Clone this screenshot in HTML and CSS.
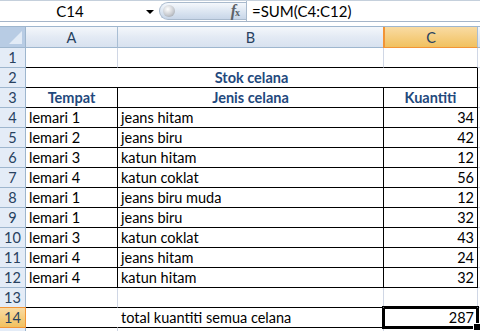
FILE: index.html
```
<!DOCTYPE html>
<html lang="en">
<head>
  <meta charset="UTF-8">
  <title>Stok celana</title>
  <link rel="stylesheet" href="styles.css">
</head>
<body>
  <!-- Formula bar -->
  <div class="formula-bar">
    <div class="name-box">
      <span class="name">C14</span>
      <span class="arrow"></span>
    </div>
    <div class="fx-pill">
      <span class="knob"></span>
      <span class="fx"><i>f</i><sub>x</sub></span>
    </div>
    <div class="formula">=SUM(C4:C12)</div>
  </div>

  <!-- Sheet grid -->
  <div class="sheet">
    <div class="hd corner"><span class="tri"></span></div>
    <div class="hd col">A</div>
    <div class="hd col">B</div>
    <div class="hd col sel-col">C</div>
    <div class="hd col"></div>

    <div class="hd row">1</div>
    <div class="cell bb"></div>
    <div class="cell bb"></div>
    <div class="cell bb"></div>
    <div class="cell"></div>

    <div class="hd row">2</div>
    <div class="cell span3 bb br title">Stok celana</div>
    <div class="cell"></div>

    <div class="hd row">3</div>
    <div class="cell bb br title">Tempat</div>
    <div class="cell bb br title">Jenis celana</div>
    <div class="cell bb br title">Kuantiti</div>
    <div class="cell"></div>

    <div class="hd row">4</div>
    <div class="cell bb br">lemari 1</div>
    <div class="cell bb br">jeans hitam</div>
    <div class="cell bb br num">34</div>
    <div class="cell"></div>

    <div class="hd row">5</div>
    <div class="cell bb br">lemari 2</div>
    <div class="cell bb br">jeans biru</div>
    <div class="cell bb br num">42</div>
    <div class="cell"></div>

    <div class="hd row">6</div>
    <div class="cell bb br">lemari 3</div>
    <div class="cell bb br">katun hitam</div>
    <div class="cell bb br num">12</div>
    <div class="cell"></div>

    <div class="hd row">7</div>
    <div class="cell bb br">lemari 4</div>
    <div class="cell bb br">katun coklat</div>
    <div class="cell bb br num">56</div>
    <div class="cell"></div>

    <div class="hd row">8</div>
    <div class="cell bb br">lemari 1</div>
    <div class="cell bb br">jeans biru muda</div>
    <div class="cell bb br num">12</div>
    <div class="cell"></div>

    <div class="hd row">9</div>
    <div class="cell bb br">lemari 1</div>
    <div class="cell bb br">jeans biru</div>
    <div class="cell bb br num">32</div>
    <div class="cell"></div>

    <div class="hd row">10</div>
    <div class="cell bb br">lemari 3</div>
    <div class="cell bb br">katun coklat</div>
    <div class="cell bb br num">43</div>
    <div class="cell"></div>

    <div class="hd row">11</div>
    <div class="cell bb br">lemari 4</div>
    <div class="cell bb br">jeans hitam</div>
    <div class="cell bb br num">24</div>
    <div class="cell"></div>

    <div class="hd row">12</div>
    <div class="cell bb br">lemari 4</div>
    <div class="cell bb br">katun hitam</div>
    <div class="cell bb br num">32</div>
    <div class="cell"></div>

    <div class="hd row">13</div>
    <div class="cell bb"></div>
    <div class="cell bb"></div>
    <div class="cell bb"></div>
    <div class="cell"></div>

    <div class="hd row sel-row">14</div>
    <div class="cell bb no-r"></div>
    <div class="cell bb br">total kuantiti semua celana</div>
    <div class="cell bb br num active">287</div>
    <div class="cell"></div>

    <div class="hd row"></div>
    <div class="cell"></div>
    <div class="cell"></div>
    <div class="cell"></div>
    <div class="cell"></div>
  </div>
</body>
</html>
```

FILE: styles.css
```
* {
  margin: 0;
  padding: 0;
  box-sizing: border-box;
}

body {
  width: 480px;
  height: 331px;
  overflow: hidden;
  background: #fff;
  font-family: 'Lato', 'Liberation Sans', sans-serif;
  font-size: 14.5px;
  color: #000;
}

/* Formula bar */
.formula-bar {
  display: flex;
  height: 22px;
  border-top: 1px solid #c5d0dc;
  border-bottom: 1px solid #a5b5c9;
  margin-bottom: 4px;
}

.name-box {
  width: 157px;
  display: flex;
  align-items: center;
  position: relative;
}

.name-box .name {
  width: 140px;
  text-align: center;
  font-size: 15px;
}

.name-box .arrow {
  width: 0;
  height: 0;
  border-left: 4px solid transparent;
  border-right: 4px solid transparent;
  border-top: 4px solid #000;
  margin-left: 6px;
  margin-top: 1px;
}

.fx-pill {
  width: 87px;
  margin: 1px 0 1px 2px;
  border: 1px solid #a9bacd;
  border-right: none;
  border-radius: 10px 0 0 10px;
  background: linear-gradient(#f5f8fc, #dbe5f1 55%, #c8d6e8);
  display: flex;
  align-items: center;
  justify-content: space-between;
  padding: 0 6px 0 3px;
}

.knob {
  width: 12px;
  height: 12px;
  border-radius: 50%;
  background: radial-gradient(circle at 40% 35%, #ffffff, #c9ccd1 55%, #8f959c);
}

.fx {
  font-family: 'Liberation Serif', serif;
  font-size: 16px;
  font-weight: bold;
  color: #5d6269;
  line-height: 1;
}

.fx sub {
  font-size: 10px;
  vertical-align: baseline;
  margin-left: -1px;
}

.formula {
  flex: 1;
  border-left: 1px solid #a9bacd;
  padding-left: 5px;
  display: flex;
  align-items: center;
  font-size: 15px;
}

/* Sheet */
.sheet {
  display: grid;
  grid-template-columns: 26px 92px 266px 94px 1fr;
  grid-template-rows: 21px;
  grid-auto-rows: 20px;
  border-top: 1px solid #9eb6ce;
}

.cell {
  border-right: 1px solid #d0d7e5;
  border-bottom: 1px solid #d0d7e5;
  display: flex;
  align-items: center;
  padding: 0 3px;
  white-space: nowrap;
}

.hd {
  display: flex;
  align-items: center;
  justify-content: center;
  color: #27415f;
  border-right: 1px solid #9eb6ce;
  border-bottom: 1px solid #9eb6ce;
}

.hd.col {
  background: linear-gradient(#f4f7fb, #e3eaf4 50%, #d8e2ef);
  border-right-color: #a9bed4;
  padding-top: 1px;
}

.hd.row {
  background: #e4ecf7;
  font-size: 14.5px;
}

.corner {
  background: #b8cce4;
  position: relative;
}

.corner .tri {
  position: absolute;
  right: 3px;
  bottom: 3px;
  width: 0;
  height: 0;
  border-left: 13px solid transparent;
  border-bottom: 13px solid #e2ebf6;
}

.sel-col {
  background: linear-gradient(#f9dba3, #f1c15f) !important;
  border: 1px solid #f29436;
  border-top: none;
  box-shadow: -1px 0 0 #f29436;
}

.sel-row {
  background: linear-gradient(#f9dba3, #f1c15f) !important;
  border-bottom-color: #f29436;
  border-right-color: #f29436;
  box-shadow: 0 -1px 0 #f29436;
}

.bb {
  border-bottom-color: #000;
}

.br {
  border-right-color: #000;
}

.no-r {
  border-right-color: #fff;
}

.span3 {
  grid-column: span 3;
}

.title {
  justify-content: center;
  font-weight: bold;
  color: #1f497d;
}

.num {
  justify-content: flex-end;
}

.active {
  position: relative;
}

.active::after {
  content: '';
  position: absolute;
  top: -2px;
  left: -2px;
  right: -2px;
  bottom: -2px;
  border: 3px double #000;
}

.active::before {
  content: '';
  position: absolute;
  right: -4px;
  bottom: -4px;
  width: 6px;
  height: 6px;
  background: #000;
  border: 1px solid #fff;
  z-index: 1;
}
```
